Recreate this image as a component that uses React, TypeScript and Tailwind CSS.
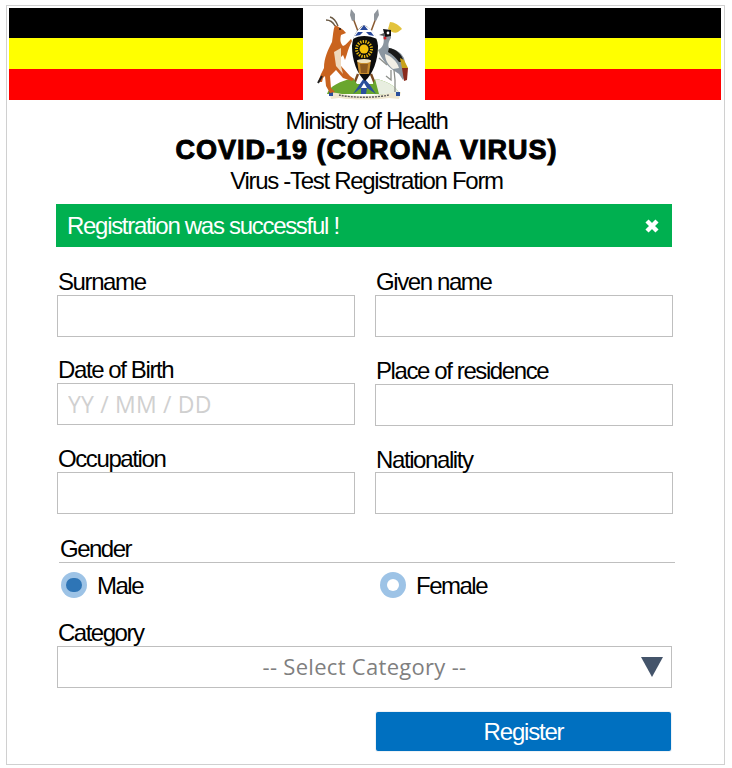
const inputClass = "block h-[42px] w-[298px] border border-[#bfbfbf] bg-white"

const Stripes = ({ width }: { width: string }) => (
  <div className={`flex flex-col ${width}`}>
    <div className="h-[30px] bg-black" />
    <div className="h-[31px] bg-[#ffff00]" />
    <div className="h-[31px] bg-[#ff0000]" />
  </div>
)

const CoatOfArms = () => (
  <svg width="122" height="92" viewBox="0 0 122 92">
    {/* spears */}
    <path d="M50 10 L56 26" stroke="#8a5a30" strokeWidth="1.6" />
    <path d="M48 1 L52 6 L52 12 L49 13 L47 7 Z" fill="#8f959c" />
    <path d="M73 10 L67 26" stroke="#8a5a30" strokeWidth="1.6" />
    <path d="M75 1 L76 7 L73 13 L71 12 L71 6 Z" fill="#8f959c" />
    {/* shield legs */}
    <path d="M55 66 L51 76 M68 66 L72 76" stroke="#7a4a20" strokeWidth="2.4" />
    {/* mound */}
    <path d="M24 86 C26 78 38 73 50 70 L54 76 L70 76 L72 71 C82 72 94 78 97 87 L70 86 L46 86 Z" fill="#6aa62e" />
    <path d="M72 71 C82 72 94 78 97 87 L76 86 Z" fill="#e8eee0" />
    <path d="M61 70 L67 77 L73 86 L64 80 L63 86 L58 86 L58 80 L50 86 Z" fill="#2a4f9c" />
    <path d="M61 75 L64 80 L58 80 Z" fill="#ffffff" />
    {/* scroll */}
    <path d="M26 84 L34 85 C50 89 72 89 88 85 L98 84 L96 91 L86 90 C72 92 48 92 36 90 L28 91 Z" fill="#efe7cf" />
    <path d="M36 87 C50 90 72 90 86 87" stroke="#5a5a5a" strokeWidth="1.4" strokeDasharray="2 1" fill="none" />
    <path d="M26 84 L30 84 L30 88 L26 88 Z M93 84 L97 84 L97 88 L93 88 Z" fill="#2a4f9c" />
    {/* shield */}
    <path d="M61 17 C68 21 74 27 75 38 C75 52 70 66 62 73 C54 66 49 52 49 38 C50 27 54 21 61 17 Z" fill="#0c0c0c" />
    <path d="M61 17 C68 21 72 25 74 31 C66 27 56 27 50 31 C52 25 55 21 61 17 Z" fill="#ffffff" />
    <path d="M61 17 L65 22 L57 22 Z M55 24 L60 24 L57 27 L52 28 Z M63 24 L68 24 L71 28 L66 27 Z" fill="#27479a" />
    <circle cx="61" cy="41" r="4.5" fill="#f4c20d" />
    <circle cx="61" cy="41" r="7.5" fill="none" stroke="#e6b80f" strokeWidth="3" strokeDasharray="1.4 1.2" />
    <path d="M54 52 L68 52 L66 66 L56 66 Z" fill="#c48a2c" />
    <ellipse cx="61" cy="53" rx="7" ry="2" fill="#efe3c0" />
    <path d="M57 56 L65 56 L64 65 L58 65 Z" fill="#8c5a1f" />
    {/* kob */}
    <path d="M32 17 C36 19 40 21 43 25 L38 27 C37 31 37 35 40 38 C43 37 45 34 48 31 L49 33 C47 37 45 42 44 46 L42 52 L40 47 L37 50 L38 58 L47 68 L51 71 L49 73 L40 70 L33 62 L27 68 L28 80 L32 84 L27 85 L23 78 L22 68 L20 70 L19 74 L15 74 L18 66 L21 60 C21 50 25 42 29 34 C30 28 30 22 32 17 Z" fill="#c9631e" />
    <path d="M31 44 L38 40 L38 58 L40 66 L33 58 Z" fill="#efd9bd" />
    <path d="M32 18 C30 14 27 12 23 12 M35 18 C33 13 31 10 27 9" stroke="#6b5a45" strokeWidth="1.4" fill="none" />
    <circle cx="37" cy="21" r="0.9" fill="#111" />
    <path d="M19 68 L15 75" stroke="#222" strokeWidth="2" />
    {/* crane */}
    <path d="M75 42 C80 40 82 34 80 28 L84 24 L88 25 L88 30 C85 34 85 38 86 40 C92 41 98 44 101 50 L104 64 L100 72 L96 66 L90 62 C84 58 78 50 75 42 Z" fill="#8b96a0" />
    <path d="M86 40 C93 41 99 46 101 54 L96 54 C93 50 89 46 85 44 Z" fill="#1a1a1a" />
    <path d="M82 46 C88 48 94 53 96 60 L90 61 C85 57 82 52 82 46 Z" fill="#f2efe6" />
    <path d="M97 50 L101 52 L105 60 L99 60 Z" fill="#c9a21a" />
    <path d="M99 60 L105 60 L104 72 L101 73 Z" fill="#8a2a1c" />
    <path d="M91 62 L92 72 L92 84 M88 62 L88 72 L83 68" stroke="#8d8f8a" strokeWidth="1.3" fill="none" />
    <path d="M76 50 L84 57" stroke="#8d8f8a" strokeWidth="1.3" />
    <path d="M85 21 L87 14 C91 14 96 17 99 21 L95 24 C92 26 88 24 85 21 Z" fill="#e3c33c" />
    <path d="M80 21 L88 22 L88 28 L82 29 Z" fill="#111" />
    <path d="M81 25 L76 27 L81 28 Z" fill="#555" />
    <circle cx="82" cy="30" r="1.5" fill="#d2232a" />
    <circle cx="85" cy="25" r="1.4" fill="#ffffff" />
  </svg>
)

const Field = ({
  label,
  placeholder,
  className,
  labelClassName,
}: {
  label: string
  placeholder?: string
  className?: string
  labelClassName?: string
}) => (
  <div className={className}>
    <label className={`block h-[29px] pl-px tracking-[-1.4px] ${labelClassName ?? "leading-[31px]"}`}>{label}</label>
    <input
      placeholder={placeholder}
      className={`${inputClass} pl-[10px] font-['Open_Sans',sans-serif] text-[23px] tracking-[0.2px] placeholder:text-[#d0d0d0]`}
    />
  </div>
)

const Radio = ({ label, checked, className }: { label: string; checked?: boolean; className?: string }) => (
  <div className={`flex items-center ${className ?? ""}`}>
    <span className="flex h-[26px] w-[26px] items-center justify-center rounded-full bg-[#9dc3e6]">
      <span className={`rounded-full ${checked ? "h-[14px] w-[16px] bg-[#2e75b6]" : "h-[12px] w-[12px] bg-white"}`} />
    </span>
    <span className="ml-[10px] pt-[2px] leading-[30px] tracking-[-1.5px]">{label}</span>
  </div>
)

const App = () => {
  return (
    <div className="h-[768px] w-[732px] bg-white pt-[5px] pl-[6px] font-['Liberation_Sans',Arial,sans-serif] text-[24px] text-black">
      <div className="h-[760px] w-[719px] border border-[#d0d0d0] pt-[2px] pl-[2px]">
        <div className="flex h-[92px] w-[712px]">
          <Stripes width="w-[294px]" />
          <CoatOfArms />
          <Stripes width="w-[296px]" />
        </div>

        <div className="mt-[6px] text-center leading-[30px] tracking-[-1.3px]">
          <p>Ministry of Health</p>
          <p className="h-[30px] text-[27px] leading-[28px] font-bold tracking-[1px] [-webkit-text-stroke:1px_black]">COVID-19 (CORONA VIRUS)</p>
          <p>Virus -Test Registration Form</p>
        </div>

        <div className="mt-[8px] ml-[47px] flex h-[43px] w-[616px] items-center justify-between bg-[#00b050] pr-[12px] pl-[11px] text-white">
          <span className="pt-px tracking-[-1.3px]">Registration was successful !</span>
          <svg width="16" height="16" viewBox="0 0 16 16">
            <path d="M3 3 L13 13 M13 3 L3 13" stroke="#ffffff" strokeWidth="4.4" />
          </svg>
        </div>

        <div className="mt-[19px] ml-[48px] grid w-[616px] grid-cols-[298px_298px] gap-x-[20px] gap-y-[17px]">
          <Field label="Surname" />
          <Field label="Given name" />
          <Field label="Date of Birth" placeholder="YY / MM / DD" />
          <Field label="Place of residence" className="mt-px" />
          <Field label="Occupation" />
          <Field label="Nationality" labelClassName="leading-[33px]" />
        </div>

        <div className="mt-[21px] ml-[50px] h-[28px] w-[616px] border-b border-[#bfbfbf] pl-px leading-[28px] tracking-[-1.5px]">
          Gender
        </div>

        <div className="mt-[8px] ml-[52px] flex h-[28px] items-center">
          <Radio label="Male" checked className="w-[319px]" />
          <Radio label="Female" />
        </div>

        <div className="mt-[18px] ml-[48px]">
          <label className="block h-[29px] pl-px leading-[31px] tracking-[-1.5px]">Category</label>
          <div className="relative flex h-[42px] w-[615px] items-center justify-center border border-[#bfbfbf] pb-[2px] font-['Open_Sans',sans-serif] text-[22px] tracking-[0.3px] text-[#7f7f7f]">
            -- Select Category --
            <svg className="absolute top-[10px] right-[8px]" width="22" height="20" viewBox="0 0 22 20">
              <path d="M0 0 H22 L11 20 Z" fill="#44546a" />
            </svg>
          </div>
        </div>

        <button
          type="button"
          className="mt-[24px] ml-[367px] block h-[39px] w-[295px] rounded-[2px] bg-[#0070c0] text-white tracking-[-1.2px] shadow-[0_0_0_1px_#eef2f6]"
        >
          Register
        </button>
      </div>
    </div>
  )
}

export default App
